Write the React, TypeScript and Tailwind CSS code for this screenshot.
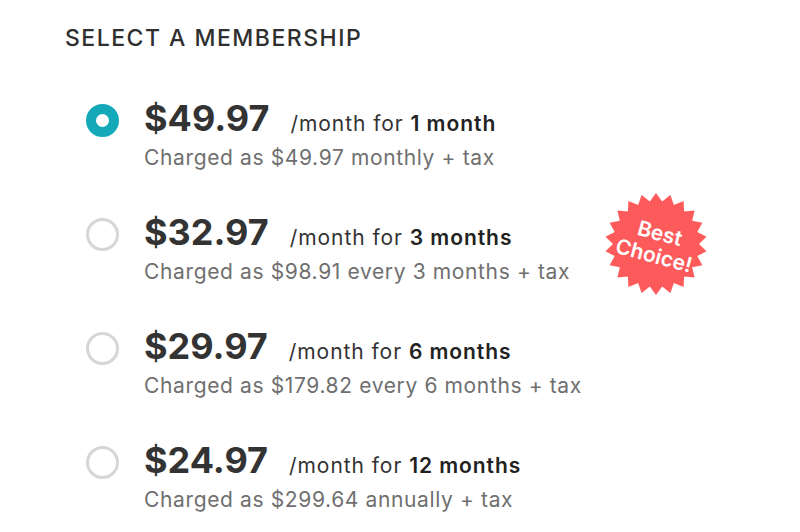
import { useState } from "react";

type Plan = {
  id: string;
  price: string;
  term: string;
  charged: string;
};

const PLANS: Plan[] = [
  { id: "1", price: "$49.97", term: "1 month", charged: "Charged as $49.97 monthly + tax" },
  { id: "3", price: "$32.97", term: "3 months", charged: "Charged as $98.91 every 3 months + tax" },
  { id: "6", price: "$29.97", term: "6 months", charged: "Charged as $179.82 every 6 months + tax" },
  { id: "12", price: "$24.97", term: "12 months", charged: "Charged as $299.64 annually + tax" },
];

// Etoile a pointes pour le badge
function burstPoints(cx: number, cy: number, outer: number, inner: number, n: number) {
  const pts: string[] = [];
  for (let i = 0; i < n * 2; i++) {
    const r = i % 2 === 0 ? outer : inner;
    const a = (Math.PI * i) / n - Math.PI / 2;
    pts.push(`${(cx + r * Math.cos(a)).toFixed(2)},${(cy + r * Math.sin(a)).toFixed(2)}`);
  }
  return pts.join(" ");
}

function BestBadge() {
  return (
    <div className="absolute left-[519px] top-[-19px] w-[102px] h-[102px]">
      <svg viewBox="0 0 102 102" className="w-full h-full">
        <polygon points={burstPoints(51, 51, 51, 43, 22)} fill="#fd5a5b" />
      </svg>
      <div className="absolute inset-0 flex flex-col items-center justify-center rotate-[15deg] text-white font-semibold text-[21px] leading-[23px] pl-[2px]">
        <span>Best</span>
        <span>Choice!</span>
      </div>
    </div>
  );
}

export default function App() {
  const [selected, setSelected] = useState("1");

  return (
    <div className="w-[800px] h-[532px] bg-white text-[#333] font-['Inter',sans-serif] pl-[65px] pt-[24px]">
      <h2 className="text-[23px] font-medium tracking-[0.065em] text-[#2f2f2f] leading-[28px]">
        SELECT A MEMBERSHIP
      </h2>

      <div className="flex flex-col gap-[42px] mt-[46px] pl-[21px]">
        {PLANS.map((plan) => {
          const isOn = plan.id === selected;
          return (
            <div
              key={plan.id}
              className="relative flex items-start gap-[25px] cursor-pointer"
              onClick={() => setSelected(plan.id)}
            >
              <span
                className={`mt-[6px] w-[33px] h-[33px] rounded-full shrink-0 ${
                  isOn ? "border-[10px] border-[#14a9b8]" : "border-[3px] border-[#d6d6d6]"
                }`}
              />
              <div className="flex flex-col">
                <div className="flex items-baseline h-[40px] mb-[8px]">
                  <span className="text-[36px] font-bold leading-[40px] text-[#333]">
                    {plan.price}
                  </span>
                  <span className="ml-[21px] text-[21px] leading-[24px] tracking-[0.045em] text-[#333]">
                    /month for <span className="font-semibold text-[#222]">{plan.term}</span>
                  </span>
                </div>
                <span className="text-[21px] leading-[24px] tracking-[0.03em] text-[#6f6f6f]">
                  {plan.charged}
                </span>
              </div>
              {plan.id === "3" && <BestBadge />}
            </div>
          );
        })}
      </div>
    </div>
  );
}
